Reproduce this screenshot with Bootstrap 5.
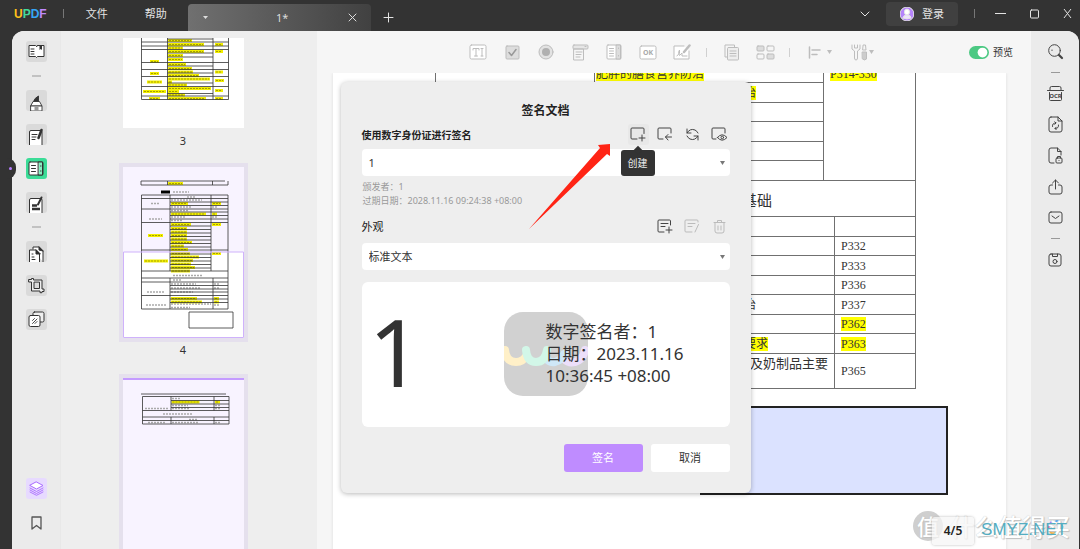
<!DOCTYPE html>
<html lang="zh-CN">
<head>
<meta charset="utf-8">
<meta name="viewport" content="width=device-width, initial-scale=1">
<title>UPDF</title>
<link href="https://cdn.jsdelivr.net/npm/bootstrap@5.3.0/dist/css/bootstrap.min.css" rel="stylesheet">
<style>
body{background:#333;font-family:"Noto Sans","Noto Sans CJK SC",sans-serif;font-size:11px;line-height:16px;color:#333}
button{border:0;background:none;padding:0;color:inherit}
svg{display:block;fill:none;stroke:currentColor;stroke-linecap:round;stroke-linejoin:round}
.titlebar{height:31px;color:#e4e4e4;padding-left:14px}
.brand{font:bold 12px/16px "Liberation Sans",sans-serif}
.menus{gap:37px;padding:0 21px 0 6px}
.vline{width:1px;height:9px;background:#777}
.doctab{width:183px;height:27px;background:linear-gradient(90deg,#707070,#414141);border-radius:4px 4px 0 0;color:#ddd;padding:0 14px}
.login{background:#404040;border-radius:4px;width:72px;height:24px}
.shell{margin:0 1px 0 12px;border-radius:12px 12px 0 0;background:#f6f6f6;min-height:0}
.rail{width:48px;background:#ebebeb;padding:10px 0 16px;flex:none}
.rail-left{gap:13px;border-top-left-radius:12px}
.rail-right{gap:10px;color:#444;padding-bottom:11px;border-top-right-radius:12px}
.rail-right button{height:21px}
.tile{width:21px;height:21px;border-radius:3px;background:#dadada;color:#333}
.rail-left .rule{width:9px;height:2px;background:#c2c2c2}
.rail-right .rule{width:9px;height:1px;background:#999}
.tile.current{background:#3bdc97;position:relative}
.tile.current::before{content:"";position:absolute;left:-28px;top:0;width:18px;height:21px;background:#333;border-radius:0 9px 9px 0}
.tile.current::after{content:"";position:absolute;left:-17px;top:9px;width:3px;height:3px;border-radius:50%;background:#b67dff}
.tile.lilac{background:#e7daff;color:#a96cff}
.tile.clear{background:none;color:#555}
.thumbs{width:257px;background:#eee;padding:7px 12px 0 0;flex:none;font-size:11px;border-left:1px solid #e8e8e8}
.thumbs>*{flex:none}
.leaf{width:121px;background:#fff}
.leaf svg{stroke-linecap:butt}
.chosen{border:4px solid #e5e0ed}
.chosen .leaf{background:#f8f3ff}
.num{height:27px;line-height:25px}
.num.near{height:16px;line-height:16px}
.bar{height:42px;gap:14px;padding:0 18px 0 151px;color:#bdbdbd}
.bar button{width:20px;height:20px}
.bar button.wide{width:28px}
.bar .vline{background:#d0d0d0}
.bar label{font-size:10px;color:#333}
.form-switch .form-check-input.preview-switch{width:20px;height:13px;margin:0;background-color:#4cc983;border:0;box-shadow:none}
.sheet{margin:0 25px 0 16px;background:#fff;box-shadow:0 0 3px #ddd;font-family:"Liberation Serif","Noto Sans CJK SC",serif;font-size:12px;line-height:16px;color:#333}
.grid-doc{width:481px;table-layout:fixed;border-collapse:collapse;margin:-10px 0 0 102px}
.grid-doc td{border:1px solid #707070;padding:0 6px}
.grid-doc tr{height:20px}
.grid-doc tr:nth-child(odd){height:19px}
.grid-doc tr.heading{height:36px;font-size:15px}
.grid-doc tr.tall{height:35px}
.grid-doc mark{background:#ff0;padding:0;color:inherit}
.grid-doc .item{padding:0 1px}
.grid-doc .start{padding-top:2px}
.grid-doc .note{font-size:13px}
.grid-doc .heading td{padding:4px 143px 0 0}
.tail{display:inline-block;width:160px;text-align:right}
.tail.long{width:172px}
.field{width:248px;height:89px;margin:17px 0 0 367px;border:2px solid #222;background:#dbe2ff}
.sign{width:410px;top:51px;background:#eee;border-radius:6px;padding:20px 21px 21px 21px;box-shadow:0 1px 5px rgba(0,0,0,.28)}
.sign h1{font-size:12px;line-height:18px;font-weight:700;margin:0;color:#222}
.sign h2{font-size:10px;line-height:16px;font-weight:700;margin:0;color:#222}
.sign h2.plain{font-size:11px;font-weight:400}
.tools{gap:6px}
.tools button{width:21px;height:21px;border-radius:3px;color:#444}
.tools button.hot{background:#e8e8e8}
.tools button:disabled{color:#bbb}
.form-select.pick{font-size:11px;line-height:17px;height:27px;padding:5px 24px 5px 7px;border:0;border-radius:4px;color:#333;background-color:#fff;background-size:5px 4px;background-position:right 5px center;background-image:url("data:image/svg+xml,%3Csvg xmlns='http://www.w3.org/2000/svg' viewBox='0 0 5 4'%3E%3Cpath fill='%23777' d='M0 0h5L2.5 4z'/%3E%3C/svg%3E")}
.facts{font-size:9px;line-height:14px;color:#999;padding-left:1px}
.under-row{margin-top:6px}
.look{height:145px;background:#fff;border-radius:6px;padding:0 0 2px 7px;margin-top:12px}
.look .big{font-size:94px;line-height:94px;width:135px;padding-bottom:5px}
.look .logo-bg{width:84px;height:84px}
.look .info{font-size:17px;line-height:22px;width:160px;left:42px;top:9px}
.acts{margin-top:17px}
.act{width:79px;height:28px;border-radius:3px;font-size:11px;line-height:16px}
.act.ok{background:#bf8cff;color:#fff}
.act.no{background:#fff;color:#333}
.tip{background:#333;color:#eee;font-size:10px;line-height:26px;width:34px;height:26px;border-radius:3px;left:-7px;top:26px}
.tip::before{content:"";position:absolute;left:14px;top:-3px;width:6px;height:6px;background:#333;transform:rotate(45deg)}
.pointer{left:188px;top:61px}
.pageno{right:105px;bottom:4px;width:42px;height:28px;line-height:28px;background:rgba(245,245,245,.75);border-radius:3px;font-size:12px;font-weight:600;color:#222;box-shadow:0 0 3px #bbb}
.stamp{right:9px;bottom:6px;color:#fff;font:500 24px/34px "Noto Sans CJK SC",sans-serif;text-shadow:1px 1px 1px #c0c0c0,0 0 1px #bbb;gap:7px}
.stamp .ring{width:30px;height:30px;border-radius:50%;background:#cfcfcf;font-size:22px;line-height:28px}
.site{right:12px;bottom:9px;font:17px/20px "Liberation Sans",sans-serif;color:#55adc1}
</style>
</head>
<body class="vh-100 d-flex flex-column overflow-hidden">
<header class="titlebar d-flex flex-shrink-0 align-items-stretch">
  <div class="d-flex align-items-center pb-1">
    <div class="brand"><span style="color:#ffc21a">U</span><span style="color:#42d99b">P</span><span style="color:#36a6f5">D</span><span style="color:#c18aff">F</span></div>
    <div class="vline ms-3 me-3"></div>
    <div class="menus d-flex">
      <button type="button">文件</button>
      <button type="button">帮助</button>
    </div>
  </div>
  <div class="doctab d-flex align-items-center justify-content-between mt-auto">
    <svg width="7" height="5" viewBox="0 0 7 5"><path d="M1 1h5L3.500 4z" fill="currentColor" stroke="none"/></svg>
    <span class="ps-2">1*</span>
    <button type="button" aria-label="关闭标签"><svg width="9" height="9" viewBox="0 0 9 9"><path d="M1 1l7 7M8 1L1 8"/></svg></button>
  </div>
  <button class="ms-2 mt-1 px-1" type="button" aria-label="新建标签"><svg width="11" height="11" viewBox="0 0 11 11"><path d="M5.500 1v9M1 5.500h9"/></svg></button>
  <div class="d-flex align-items-center ms-auto pb-1">
    <button type="button" aria-label="更多"><svg width="10" height="6" viewBox="0 0 10 6"><path d="M1 1l4 4 4-4"/></svg></button>
    <button class="login d-flex align-items-center justify-content-center gap-2 ms-3 me-3" type="button">
      <svg width="14" height="14" viewBox="0 0 14 14" stroke="none"><circle cx="7" cy="7" r="7" fill="#b583fb"/><ellipse cx="7" cy="5" rx="2.600" ry="3" fill="#fff"/><path d="M3 11q0-3 4-3t4 3q-4 2-8 0z" fill="#eee0ff"/></svg>登录</button>
    <div class="vline me-3"></div>
    <button class="ms-1 me-4" type="button" aria-label="最小化"><svg width="11" height="9" viewBox="0 0 11 9"><path d="M0 4.500h11"/></svg></button>
    <button class="me-4" type="button" aria-label="最大化"><svg width="9" height="10" viewBox="0 0 9 10"><rect x=".5" y="1" width="8" height="8" rx="1"/></svg></button>
    <button class="me-2" type="button" aria-label="关闭"><svg width="9" height="9" viewBox="0 0 9 9"><path d="M1 0l7 9M8 0L1 9"/></svg></button>
  </div>
</header>

<div class="shell position-relative d-flex flex-grow-1">
  <nav class="rail rail-left d-flex flex-column align-items-center" aria-label="工具">
    <button class="tile d-grid" type="button" aria-label="阅读"><svg class="m-auto" width="17" height="15" viewBox="0 0 17 15"><path d="M8.500 2.500L7.500 1.500H1v11h6.500l1 1 1-1H16v-11H9.500z" fill="#fff"/><path d="M3 5h3M3 7.500h3M3 10h3"/><path d="M11.500 1h2.500v5l-1.200-1-1.300 1z" fill="#333" stroke="none"/></svg></button>
    <div class="rule"></div>
    <button class="tile d-grid" type="button" aria-label="注释"><svg class="ms-auto me-auto mt-auto" width="15" height="16" viewBox="0 0 15 16" stroke-width=".9"><path d="M4.500 6.500Q5.500 3 9.500 1v5.500z" fill="#333"/><path d="M4.500 6.500h6L13 11H2z" fill="#fff"/><path d="M2 11h11v5H2z" fill="#fff"/><path d="M5.500 11.500h4v4.500h-4z" fill="#999" stroke="none"/></svg></button>
    <button class="tile d-grid" type="button" aria-label="编辑"><svg class="ms-auto me-auto mt-auto" width="16" height="17" viewBox="0 0 16 17"><path d="M1.500 17V4Q1.500 2.500 3 2.500h9.500q1.500 0 1.500 1.500v13" fill="#fff"/><path d="M4 6.500h5M4 9h4M4 11.500h3"/><path d="M13.500 2l-3 8" stroke-width="2.500"/></svg></button>
    <button class="tile current d-grid" type="button" aria-label="表单"><svg class="m-auto" width="16" height="15" viewBox="0 0 16 15"><rect x="1" y="1" width="14" height="13" rx="1" fill="#fff"/><path d="M10.500 1h4v13h-4z" fill="#8af0c4"/><path d="M3.500 4.500h4M3.500 7.500h4M3.500 10.500h4M12.500 5h.5M12.500 10h.5"/></svg></button>
    <button class="tile d-grid" type="button" aria-label="密文"><svg class="ms-auto me-auto mt-auto" width="16" height="17" viewBox="0 0 16 17"><path d="M1.500 17V4Q1.500 2.500 3 2.500h9.500q1.500 0 1.500 1.500v13" fill="#fff"/><path d="M4 9.500h5M4 13h8" stroke-width="2.500" stroke-linecap="butt"/><path d="M13.500 1.500L10 8.500" stroke-width="2"/></svg></button>
    <div class="rule"></div>
    <button class="tile d-grid" type="button" aria-label="组织页面"><svg class="ms-auto me-auto mt-auto" width="16" height="17" viewBox="0 0 16 17"><path d="M5 4V2h6l4 4v11" fill="#fff"/><path d="M1.500 17V5H8l3.500 3.500V17" fill="#fff"/><path d="M8 5v4h4zM11 2v3l4 1z" fill="#333"/><path d="M4 9h1M4 12h2M4 14.500h3"/></svg></button>
    <button class="tile d-grid" type="button" aria-label="裁剪"><svg class="m-auto" width="17" height="17" viewBox="0 0 17 17"><path d="M1 2.500h2.500V1.500h2v1.500H14v9h2v2.500h-2v1.200h-2V14H3.500V5H1zM6 5.500v6h5.500v-6z" fill="#eee" fill-rule="evenodd"/></svg></button>
    <button class="tile d-grid" type="button" aria-label="批量"><svg class="m-auto" width="17" height="17" viewBox="0 0 17 17"><rect x="5" y="1" width="11" height="10" rx="1.500" fill="#eee"/><rect x="1" y="4.500" width="11" height="11" rx="1.500" fill="#fff"/><path d="M4.500 9.500l2-2M4.500 12.500l4.500-4.500M7 12.500l2-2" stroke-width=".9"/></svg></button>
    <button class="tile lilac d-grid mt-auto" type="button" aria-label="图层"><svg class="m-auto" width="15" height="15" viewBox="0 0 15 15"><path d="M7.500 1L14 4.500 7.500 8 1 4.500z" fill="#fff"/><path d="M1 7l6.500 3.500L14 7M1 9l6.500 3.500L14 9M1 11l6.500 3.300L14 11" stroke-width=".9"/></svg></button>
    <button class="tile clear d-grid" type="button" aria-label="书签"><svg class="m-auto" width="11" height="14" viewBox="0 0 11 14" stroke-width="1.300"><path d="M1 1h9v12L5.500 9.500 1 13z"/></svg></button>
  </nav>

  <aside class="thumbs d-flex flex-column align-items-center overflow-hidden" aria-label="页面缩略图">
    <div class="leaf"><svg id="leaf3" width="121" height="90" viewBox="0 0 121 90"></svg></div>
    <div class="num">3</div>
    <div class="chosen mt-2"><div class="leaf"><svg id="leaf4" width="121" height="171" viewBox="0 0 121 171"></svg></div></div>
    <div class="num near">4</div>
    <div class="chosen mt-3"><div class="leaf"><svg id="leaf5" width="121" height="171" viewBox="0 0 121 171"></svg></div></div>
  </aside>

  <main class="flex-grow-1 overflow-hidden">
    <div class="bar d-flex align-items-center">
      <button type="button" aria-label="文本域"><svg class="m-auto" width="18" height="16" viewBox="0 0 18 16"><rect x="1" y="1" width="16" height="14" rx="1.500" fill="#fff"/><path d="M4 6V4.500h6V6M7 4.500V12M5.500 12h3M13 4.500V12M12 4.500h2M12 12h2"/></svg></button>
      <button type="button" aria-label="复选框"><svg class="m-auto" width="15" height="15" viewBox="0 0 15 15"><rect x="1" y="1" width="13" height="13" rx="1" fill="#ddd"/><path d="M4 7.500l2.500 3L11 4.500" stroke="#999" stroke-width="1.500"/></svg></button>
      <button type="button" aria-label="单选"><svg class="m-auto" width="16" height="16" viewBox="0 0 16 16"><circle cx="8" cy="8" r="7" fill="#e2e2e2"/><circle cx="8" cy="8" r="4" fill="#b0b0b0" stroke="none"/></svg></button>
      <button type="button" aria-label="下拉框"><svg class="m-auto" width="17" height="17" viewBox="0 0 17 17"><rect x="1" y="1" width="15" height="4" rx="1" fill="#e6e6e6"/><path d="M2 5h9.500v11H2zM4 8h6M4 10.500h5M4 13h4M13 2.500h1"/></svg></button>
      <button type="button" aria-label="列表"><svg class="m-auto" width="16" height="16" viewBox="0 0 16 16"><rect x="1" y="1" width="14" height="14" rx="1" fill="#fff"/><path d="M10.500 1h4v14h-4z" fill="#ddd"/><path d="M3.500 4.500h4M3.500 7h4M3.500 9.500h4M3.500 12h4M12.500 4v.5M12.500 11.500v.5"/></svg></button>
      <button type="button" aria-label="按钮"><svg class="m-auto" width="18" height="15" viewBox="0 0 18 15"><rect x="1" y="1" width="16" height="13" rx="1.500" fill="#fff"/><text x="9" y="10" text-anchor="middle" font-size="7" font-weight="700" fill="#aaa" stroke="none">OK</text></svg></button>
      <button type="button" aria-label="签名域"><svg class="m-auto" width="18" height="16" viewBox="0 0 18 16"><path d="M11 2H1v13h15V7" fill="#fff"/><path d="M4 12q4-3 2.500-6-2 2 0 5.500L9 9v3h5"/><path d="M16.500 1.500L11 8" stroke-width="2.500"/></svg></button>
      <div class="vline"></div>
      <button type="button" aria-label="多重复制"><svg class="m-auto" width="17" height="17" viewBox="0 0 17 17"><path d="M4 13H2V1h9.500v2"/><rect x="4.500" y="3.500" width="11" height="12.500" rx="1" fill="#eee"/><path d="M7 7h6M7 9.500h6M7 12h6"/></svg></button>
      <button type="button" aria-label="跨页复制"><svg class="m-auto" width="19" height="15" viewBox="0 0 19 15"><rect x="1" y="1" width="7" height="5" rx="1" fill="#ddd"/><rect x="11" y="1" width="7" height="5" rx="1"/><rect x="1" y="9" width="7" height="5" rx="1"/><rect x="11" y="9" width="7" height="5" rx="1" fill="#ddd"/></svg></button>
      <div class="vline"></div>
      <button class="wide d-flex align-items-center justify-content-between" type="button" aria-label="对齐"><svg class="ms-1" width="13" height="13" viewBox="0 0 13 13"><path d="M1.500 1v11M4 4h8M4 8.500h5" stroke-width="1.500"/></svg><svg width="5" height="4" viewBox="0 0 5 4"><path d="M0 0h5L2.500 4z" fill="currentColor" stroke="none"/></svg></button>
      <button class="wide d-flex align-items-center justify-content-between" type="button" aria-label="工具"><svg class="ms-1" width="18" height="17" viewBox="0 0 18 17"><path d="M2 1v4l2.500 2v7q0 2 1.500 2t1.500-2V7L10 5V1M4.500 1v3h3V1" /><path d="M13.500 1h2l.5 5h-3z" /><path d="M12.500 8h4v7q-2 2-4 0z" fill="#ccc"/></svg><svg width="5" height="4" viewBox="0 0 5 4"><path d="M0 0h5L2.500 4z" fill="currentColor" stroke="none"/></svg></button>
      <div class="form-check form-switch ms-auto m-0 p-0 d-flex align-items-center gap-1">
        <input class="form-check-input preview-switch float-none" type="checkbox" role="switch" id="preview" checked>
        <label for="preview">预览</label>
      </div>
    </div>
    <div class="overflow-hidden h-100">
      <article class="sheet h-100 overflow-hidden">
        <table class="grid-doc">
          <colgroup><col style="width:159px"><col style="width:229px"><col style="width:11px"><col></colgroup>
          <tr><td rowspan="6"></td><td class="item start"><mark>肥胖的膳食营养防治</mark></td><td colspan="2" rowspan="6" class="align-top start"><mark>P314-330</mark></td></tr>
          <tr><td class="item"><span class="tail"><mark>治</mark></span></td></tr>
          <tr><td></td></tr>
          <tr><td></td></tr>
          <tr><td></td></tr>
          <tr><td></td></tr>
          <tr class="heading"><td colspan="4" class="text-end">基础</td></tr>
          <tr><td></td><td colspan="2"></td><td></td></tr>
          <tr><td rowspan="4"></td><td colspan="2"></td><td>P332</td></tr>
          <tr><td colspan="2"></td><td>P333</td></tr>
          <tr><td colspan="2"></td><td>P336</td></tr>
          <tr><td colspan="2" class="item"><span class="tail">治</span></td><td>P337</td></tr>
          <tr><td rowspan="3"></td><td colspan="2"></td><td><mark>P362</mark></td></tr>
          <tr><td colspan="2" class="item"><span class="tail long"><mark>要求</mark></span></td><td><mark>P363</mark></td></tr>
          <tr class="tall"><td colspan="2" class="text-end align-top start note">及奶制品主要</td><td>P365</td></tr>
        </table>
        <div class="field"></div>
      </article>
    </div>
  </main>

  <nav class="rail rail-right d-flex flex-column align-items-center" aria-label="操作">
    <button class="d-grid" type="button" aria-label="搜索"><svg class="m-auto" width="17" height="17" viewBox="0 0 17 17"><circle cx="7.500" cy="7.500" r="5.800"/><path d="M5 7.500V7"/><path d="M12 12l3 3" stroke-width="2.200"/></svg></button>
    <div class="rule"></div>
    <button class="d-grid" type="button" aria-label="OCR"><svg class="m-auto" width="17" height="17" viewBox="0 0 17 17"><path d="M3 5V3q0-1.500 1.500-1.500h8Q14 1.500 14 3v2M.5 5.500h16M2.500 7.500v7q0 1 1 1h10q1 0 1-1v-7"/><text x="8.500" y="13" text-anchor="middle" font-size="6" font-weight="700" fill="#444" stroke="none">OCR</text></svg></button>
    <button class="d-grid" type="button" aria-label="转换"><svg class="m-auto" width="15" height="17" viewBox="0 0 15 17"><path d="M3 1h7l4 4v9q0 2-2 2H3q-2 0-2-2V3q0-2 2-2zM10 1v4h4"/><path d="M4.500 10.500Q4 7 8 7L6.800 5.800M8 7L6.800 8.300M10.500 9Q11 12.500 7 12.500l1.200 1.200M7 12.500l1.200-1.300"/></svg></button>
    <button class="d-grid" type="button" aria-label="保护"><svg class="m-auto" width="15" height="17" viewBox="0 0 15 17"><path d="M6 16H3q-2 0-2-2V3q0-2 2-2h6.500L13 4.500V8M9.500 1v3.500H13"/><rect x="8" y="11" width="6" height="5" rx="1"/><path d="M9.500 11V9.500h3V11M11 13.500v.1"/></svg></button>
    <button class="d-grid" type="button" aria-label="分享"><svg class="m-auto" width="15" height="16" viewBox="0 0 15 16"><path d="M7.500 10V1M4.500 4l3-3 3 3M4.500 6H3Q1 6 1 8v5q0 2 2 2h9q2 0 2-2V8q0-2-2-2h-1.500"/></svg></button>
    <button class="d-grid" type="button" aria-label="邮件"><svg class="m-auto" width="15" height="13" viewBox="0 0 15 13"><rect x="1" y="1" width="13" height="11" rx="2"/><path d="M4 5l3.500 2.500L11 5"/></svg></button>
    <div class="rule"></div>
    <button class="d-grid" type="button" aria-label="保存"><svg class="m-auto" width="14" height="14" viewBox="0 0 14 14"><path d="M3 1h8q2 0 2 2v8q0 2-2 2H3q-2 0-2-2V3q0-2 2-2zM4.500 1v2.500h5V1"/><circle cx="7" cy="8.500" r="2"/></svg></button>
    <button class="d-grid mt-auto" type="button" aria-label="AI 助手"><svg class="m-auto" width="17" height="17" viewBox="0 0 17 17" stroke-width="1.800"><path d="M3 6q0-4 4-3" stroke="#a57bff"/><path d="M8 3q3-3 5.500 0" stroke="#3aa0ff"/><path d="M14 5q3 3 0 6" stroke="#2bc8d8"/><path d="M13 13q-2 3-5 1" stroke="#37d39a"/><path d="M7 14q-4 1-4-3" stroke="#ffb13b"/><path d="M2 10q-1-2 1-4" stroke="#ff6fae"/></svg></button>
  </nav>

  <section class="sign position-absolute start-50 translate-middle-x" role="dialog" aria-labelledby="sign-title">
    <h1 id="sign-title" class="text-center">签名文档</h1>
    <div class="d-flex align-items-center justify-content-between mt-1">
      <h2><label for="ident">使用数字身份证进行签名</label></h2>
      <div class="tools d-flex">
        <div class="position-relative">
          <button class="hot d-grid" type="button" aria-label="创建"><svg class="m-auto" width="16" height="15" viewBox="0 0 16 15"><path d="M14 6.500V2q0-1-1-1H2Q1 1 1 2v9q0 1 1 1h5M12 8v6M9 11h6"/></svg></button>
          <div class="tip position-absolute text-center z-1">创建</div>
        </div>
        <button class="d-grid" type="button" aria-label="导入"><svg class="m-auto" width="16" height="15" viewBox="0 0 16 15"><path d="M14 6V2q0-1-1-1H2Q1 1 1 2v9q0 1 1 1h4M14.500 10h-6M11 7.500L8.500 10l2.500 3"/></svg></button>
        <button class="d-grid" type="button" aria-label="刷新"><svg class="m-auto" width="15" height="15" viewBox="0 0 15 15"><path d="M2 2v4h4M2 6q3-5 8-3 2 1 3 3M13 13V9H9M13 9q-3 5-8 3-2-1-3-3"/></svg></button>
        <button class="d-grid" type="button" aria-label="查看"><svg class="m-auto" width="17" height="15" viewBox="0 0 17 15"><path d="M14 6V2q0-1-1-1H2Q1 1 1 2v9q0 1 1 1h3"/><path d="M6.500 10.500q4.500-5.500 9.500 0-5 5.500-9.500 0z"/><circle cx="11.300" cy="10.500" r="1.300"/></svg></button>
      </div>
    </div>
    <select class="form-select pick mt-1" id="ident"><option>1</option></select>
    <div class="facts mt-1">颁发者：1<br>过期日期：2028.11.16 09:24:38 +08:00</div>
    <div class="d-flex align-items-center justify-content-between mt-2">
      <h2 class="plain"><label for="style">外观</label></h2>
      <div class="tools d-flex">
        <button class="d-grid" type="button" aria-label="新建外观"><svg class="m-auto" width="16" height="15" viewBox="0 0 16 15"><path d="M13.500 6V2q0-1-1-1H2Q1 1 1 2v10q0 1 1 1h5M4 4.500h7M4 7.500h4M12 8v6M9 11h6"/></svg></button>
        <button class="d-grid" type="button" disabled aria-label="编辑外观"><svg class="m-auto" width="16" height="15" viewBox="0 0 16 15"><path d="M14 3V2q0-1-1-1H2Q1 1 1 2v10q0 1 1 1h6M4 4.500h7M4 7.500h4M14.500 5.500L11 13"/></svg></button>
        <button class="d-grid" type="button" disabled aria-label="删除外观"><svg class="m-auto" width="13" height="15" viewBox="0 0 13 15"><path d="M1 3.500h11M4.500 3.500V1.500h4v2M2 3.500V12q0 2 2 2h5q2 0 2-2V3.500M5 7v4M8 7v4"/></svg></button>
      </div>
    </div>
    <select class="form-select pick under-row" id="style"><option>标准文本</option></select>
    <div class="look d-flex align-items-center">
      <div class="big">1</div>
      <div class="logo-bg position-relative">
        <svg width="84" height="84" viewBox="0 0 84 84" stroke-width="8"><rect width="84" height="84" rx="19" fill="#d1d1d1" stroke="none"/><path d="M60 47q5 5 11 3 8-2 10-12" stroke="#ecdffa"/><path d="M42 46q3 5 9 4 7-2 9-8" stroke="#cfe8f8"/><path d="M0 38h1q1 12 11 12 7 0 10-6" stroke="#fff0c8" stroke-linecap="butt"/><path d="M22 38q1 12 10 12t11-12" stroke="#d2f7e8"/></svg>
        <div class="info position-absolute">数字签名者：1<br>日期：2023.11.16<br>10:36:45 +08:00</div>
      </div>
    </div>
    <div class="acts d-flex justify-content-end gap-2">
      <button class="act ok" type="button">签名</button>
      <button class="act no" type="button">取消</button>
    </div>
    <svg class="pointer position-absolute z-1" width="82" height="88" viewBox="0 0 82 88"><path d="M0 86L71 5l-2-3L81 1v12l-3-2z" fill="#ff2415" stroke="none"/></svg>
  </section>

  <div class="stamp position-absolute d-flex align-items-center"><span class="ring text-center">值</span><span>什么值得买</span></div>
  <div class="pageno position-absolute text-center">4/5</div>
  <div class="site position-absolute">SMYZ.NET</div>
</div>

<script src="https://cdn.jsdelivr.net/npm/bootstrap@5.3.0/dist/js/bootstrap.bundle.min.js"></script>
<script>
// Miniature tables: lines are [x1,y1,x2,y2], marks are [x,y,w], words are [x,y,w].
function mini(id, o) {
  let s = o.under || '';
  for (const [x, y, w] of o.marks) s += `<rect x="${x}" y="${y}" width="${w}" height="3" fill="#f2ee00" stroke="none"/><path d="M${x + 1} ${y + 1.5}h${w - 2}" stroke="#a5a100" stroke-width="1" stroke-dasharray="2 1"/>`;
  for (const [x, y, w] of o.words) s += `<path d="M${x} ${y}h${w}" stroke="#aaa" stroke-width="1.500" stroke-dasharray="2 1"/>`;
  for (const [a, b, c, d] of o.lines) s += `<path d="M${a} ${b}L${c} ${d}" stroke="#333" stroke-width=".8"/>`;
  document.getElementById(id).innerHTML = s + (o.over || '');
}
const rows = (ys, a, b) => ys.map(y => [a, y, b, y]);
mini('leaf3', {
  marks: [[45,1,24],[45,5,36],[92,5,8],[45,8.5,15],[45,12,36],[92,12,8],[45,16,15],[45,20,15],[27,22,9],[45,25,18],[45,29,24],[45,32.5,25],[92,32.5,8],[27,34,9],[45,36,31],[45,39.500,42],[92,41,9],[24,42.500,15],[45,42.500,4],[45,45.500,19],[45,49,43],[92,51,8],[20,52,23],[45,52,11],[45,55.500,17],[26,59,11],[45,59,38],[92,59,8]],
  words: [], lines: [...rows([4,8,11.5,24.5,31.5,38.5,48.5,58,61.5],18.5,105.5), ...rows([1,15,19,28,35,45,55.5],44.5,90), [18.5,0,18.5,61.5],[44.5,0,44.5,61.5],[90,0,90,61.5],[105.5,0,105.5,61.5]]
});
mini('leaf4', {
  under: '<rect x="0" y="85" width="121" height="86" fill="#fff" stroke="none"/>',
  marks: [[45,15,15],[48,35,17],[89,35,9],[48,45.500,35],[89,45.500,5],[48,56,20],[89,56,9],[48,60,16],[48,63.500,16],[48,67,16],[25,67,15],[48,70.500,16],[48,74,21],[48,77.500,13],[48,81,17],[48,85,19],[89,85,9],[48,88.500,28],[48,92,22],[21,92.500,24],[48,95.500,20],[48,99,24],[48,102.500,19],[48,130,26],[91,130,5],[48,133.500,31],[91,133.500,5]],
  words: [[50,25,16],[64,30,9],[48,33,31],[28,36.500,9],[48,40,20],[48,43.500,18],[89,40,5],[48,50,14],[26,52,13],[48,53.500,12],[89,50,5],[50,108.500,30],[50,113,8],[48,117,25],[48,121,30],[24,125,17],[48,125,22],[91,117,5],[91,121,5],[23,138,20],[48,137,40],[48,140.500,19],[91,138,5]],
  lines: [...rows([14],18,102),...rows([18],18,105),[18,14,18,18],[44.5,14,44.5,18],[89.5,14,89.5,18],[105,14,105,18],
    ...rows([28,31.5,42,55.5,83,104,111,115,128.500,142],18.5,105),...rows([35,38.5,45,48.5,52,118.500,122,125,132,135.500],47,105),...rows([59,62.500,66,69.500,73,76.500,80,87,90.500,94,97.500,101],47,88),
    [18.5,28,18.5,142],[47,28,47,104],[88,28,88,104],[105,28,105,142],[47,111,47,142],[90,111,90,142],[66,145,110,145],[66,161,110,161],[66,145,66,161],[110,145,110,161]],
  over: '<path d="M38 25h9" stroke="#000" stroke-width="3"/><rect x=".5" y="85" width="120" height="85.500" stroke="#cfb2fb"/>'
});
mini('leaf5', {
  marks: [[48.500,22.500,28],[92,22.500,5]],
  words: [[49,20.500,8],[49,27.500,16],[92,27.500,5],[22,30.500,24],[49,30.500,17],[92,30.500,5],[40,36,30],[66,41.500,9],[25,44.500,18],[49,44.500,27],[92,44.500,6]],
  lines: [...rows([16],18,103),...rows([18.5,32.5,39,46],19.5,106),...rows([22.5,26,29.500],48,106),...rows([42.500],19.5,106),[19.5,18.5,19.5,46],[106,18.5,106,46],[48,18.5,48,32.5],[91,18.5,91,32.5],[48,39,48,46],[91,39,91,46]],
  over: '<path d="M0 1h121" stroke="#c49bff" stroke-width="2"/>'
});
</script>
</body>
</html>
